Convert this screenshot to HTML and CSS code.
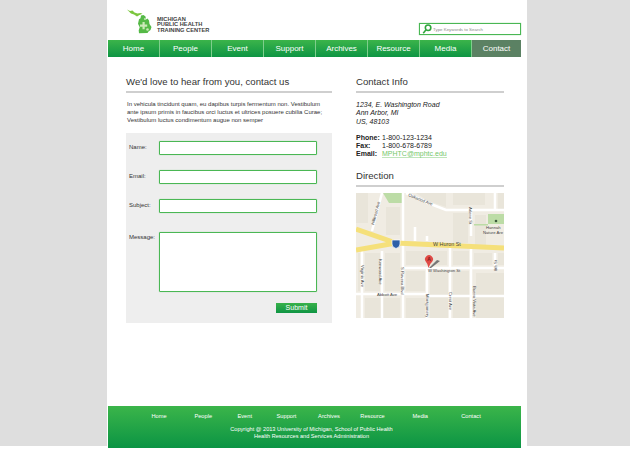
FILE: index.html
```html
<!DOCTYPE html>
<html lang="en">
<head>
<meta charset="utf-8">
<title>Contact - Michigan Public Health Training Center</title>
<link rel="stylesheet" href="styles.css">
</head>
<body>
<div class="page">
  <div class="column">
    <header class="top">
      <a class="logo" href="#">
        <svg class="logo-mark" viewBox="0 0 28 28" width="28" height="28">
          <path class="logo-up" d="M1 1.500l3 1.500 2.500-.5 2 2 3 1 3-.5 2 .8-3 1.200-2.500 1.500-3-2-3-1-2.500-2.500z"/>
          <path class="logo-fill" d="M15 7.500l2.500-.5 2 1.500.5 3 1.500-1 1.500 2 .5 3.500 2 3-1 3-2 1.500-1 1.500-8.500.2-.3-3 1-3-1.700-3.500 1-4.500 1.500-1z"/>
          <path class="logo-cut" d="M16.500 14h2.200v2.500h2.500v2.200h-2.500v2.500h-2.200v-2.500H14v-2.200h2.500z"/>
          <circle class="logo-cut" cx="21.500" cy="21.500" r="1.300"/>
          <circle class="logo-cut" cx="19" cy="11" r="1"/>
        </svg>
        <span class="logo-text">MICHIGAN<br>PUBLIC HEALTH<br>TRAINING CENTER</span>
      </a>
      <div class="search">
        <svg class="search-icon" viewBox="0 0 12 12" width="10" height="10">
          <circle cx="7.300" cy="4.500" r="3.300"/>
          <path d="M4.800 7L1.500 11"/>
        </svg>
        <span class="search-text">Type Keywords to Search</span>
      </div>
    </header>
    <nav class="nav">
      <a class="nav-item" href="#">Home</a>
      <a class="nav-item" href="#">People</a>
      <a class="nav-item" href="#">Event</a>
      <a class="nav-item" href="#">Support</a>
      <a class="nav-item" href="#">Archives</a>
      <a class="nav-item" href="#">Resource</a>
      <a class="nav-item" href="#">Media</a>
      <a class="nav-item active" href="#">Contact</a>
    </nav>
    <main class="content">
      <section class="left">
        <h1 class="heading">We'd love to hear from you, contact us</h1>
        <p class="intro">In vehicula tincidunt quam, eu dapibus turpis fermentum non. Vestibulum<br>ante ipsum primis in faucibus orci luctus et ultrices posuere cubilia Curae;<br>Vestibulum luctus condimentum augue non semper</p>
        <form class="form">
          <div class="row"><label class="label" for="f-name">Name:</label><input class="field" id="f-name" type="text"></div>
          <div class="row"><label class="label" for="f-email">Email:</label><input class="field" id="f-email" type="text"></div>
          <div class="row"><label class="label" for="f-subject">Subject:</label><input class="field" id="f-subject" type="text"></div>
          <div class="row row-message"><label class="label label-top" for="f-message">Message:</label><textarea class="field area" id="f-message"></textarea></div>
          <div class="actions"><button class="submit" type="button">Submit</button></div>
        </form>
      </section>
      <aside class="right">
        <h2 class="heading">Contact Info</h2>
        <address class="address">1234, E. Washington Road<br>Ann Arbor, MI<br>US, 48103</address>
        <dl class="phones">
          <dt>Phone:</dt><dd>1-800-123-1234</dd>
          <dt>Fax:</dt><dd>1-800-678-6789</dd>
          <dt>Email:</dt><dd><a class="mail" href="#">MPHTC@mphtc.edu</a></dd>
        </dl>
        <h2 class="heading direction">Direction</h2>
        <svg class="map" viewBox="0 0 148 125" width="148" height="125">
          <rect class="land" width="148" height="125"/>
          <path class="block" d="M50 0h40v14L72 8 60 0zM97 0h32v12H97zM142 0h6v18h-6zM2 60h2v38H2zM9 60h15v38H9zM29 60h15v38H29zM50 58h41v14H50zM97 58h16v14H97zM118 60h18v12h-18zM142 60h6v12h-6zM50 78h19v20H50zM74 78h18v47H74zM97 78h16v47H97zM120 80h28v45h-28zM9 105h35v20H9zM50 105h19v20H50zM97 20h15v30H97zM119 22h11v30h-11zM0 0h12v30H0zM30 14h14v28H30z"/>
          <path class="park" d="M27 0h19v10h-13z"/>
          <path class="park" d="M132 21h16v10h-16zM118 31h14v1.500h-14z"/>
          <g class="street">
            <path d="M47 0V125M6 57V125M26 58V125M71 75V125M94 55V125M115 15V43M115 55V125M139 0V18M139 60V75M0 101H71M71 103H148M47 75H148M50 0L72 10 90 17H148M16 38L26 0M59 34V48M71 43V48"/>
          </g>
          <path class="road" d="M0 36L40 50 148 55M0 57L40 50"/>
          <path class="shield" d="M36 47h8v4q0 3.500-4 4.500q-4-1-4-4.500z"/>
          <circle class="tree" cx="140" cy="28" r="1.300"/>
          <text class="map-text" x="77" y="52.500">W Huron St</text>
          <text class="map-text small" x="72" y="79">W Washington St</text>
          <text class="map-text small" x="21" y="103">Abbott Ave</text>
          <text class="map-text small" transform="translate(5 72) rotate(90)">Virginia Ave</text>
          <text class="map-text small" transform="translate(23 66) rotate(90)">Kenwood Ave</text>
          <text class="map-text small" transform="translate(45 74) rotate(90)">S Ravena Blvd</text>
          <text class="map-text small" transform="translate(69.500 101) rotate(90)">Montgomery</text>
          <text class="map-text small" transform="translate(93 99) rotate(90)">Crest Ave</text>
          <text class="map-text small" transform="translate(116.500 93) rotate(90)">Buena Vista Ave</text>
          <text class="map-text small" transform="translate(112.500 14) rotate(90)">Arlene St</text>
          <text class="map-text small" transform="translate(18 32) rotate(-75)">Hillwood Ave</text>
          <text class="map-text small" transform="translate(52 3) rotate(22)">Oakwood Ave</text>
          <text class="map-text small" transform="translate(141 78) rotate(-90)">8th St</text>
          <text class="map-text small" x="130" y="36">Hannah</text>
          <text class="map-text small" x="127" y="41">Nature Are</text>
          <path class="pin-shadow" d="M73 75L81 67l3 1-9 7z"/>
          <path class="pin" d="M72.500 75q-.5-4-2.800-6.500a4 4 0 1 1 6.600 0q-2.800 2.500-3.800 6.500z"/>
          <text class="pin-text" x="73" y="67.500">A</text>
        </svg>
      </aside>
    </main>
    <footer class="footer">
      <div class="footer-nav">
        <a href="#">Home</a><a href="#">People</a><a href="#">Event</a><a href="#">Support</a><a href="#">Archives</a><a href="#">Resource</a><a href="#">Media</a><a href="#">Contact</a>
      </div>
      <p class="copy">Copyright @ 2013 University of Michigan, School of Public Health<br>Health Resources and Services Administration</p>
    </footer>
  </div>
</div>
</body>
</html>
```
FILE: styles.css
```css
* { box-sizing: border-box; }
html, body { margin: 0; padding: 0; background: #fff; }
body { font-family: "Liberation Sans", Arial, sans-serif; color: #222; overflow: hidden; height: 450px; }
a { color: inherit; text-decoration: none; }
.page { background: #dedede; height: 446px; padding-left: 107px; }
.column { width: 420px; height: 450px; background: #fff; padding: 0 6px 0 1px; display: flex; flex-direction: column; }
.top { height: 40px; display: flex; justify-content: space-between; padding: 8px 0 0 18px; }
.logo { display: flex; align-items: flex-start; color: #3f3f3f; }
.logo-mark { display: block; }
.logo-fill { fill: #55b947; }
.logo-up { fill: #7cc63f; }
.logo-cut { fill: #cbe9b8; }
.logo-text { font-size: 5.700px; font-weight: bold; line-height: 5.800px; margin: 8.500px 0 0 3px; white-space: nowrap; }
.search { width: 102px; height: 12px; margin-top: 15px; border: 1px solid #4ab754; box-shadow: 0 0 1px #7dcd83; display: flex; align-items: center; padding-left: 2px; }
.search-icon { display: block; flex: none; fill: none; stroke: #2fa53c; stroke-width: 1.900; }
.search-text { font-size: 4.400px; color: #8a8a8a; margin-left: 1px; white-space: nowrap; }
.nav { height: 17px; display: flex; background: linear-gradient(#3bb44a, #0e9544); }
.nav-item { width: 52px; display: flex; align-items: center; justify-content: center; color: #fff; font-size: 8px; border-right: 1px solid #7fce8c; }
.nav-item.active { flex: 1; background: #5b8163; border-right: 0; color: #fff; }
.content { flex: 1; display: flex; padding: 0 0 0 18px; gap: 24px; }
.left { width: 206px; }
.right { width: 148px; }
.heading { margin: 0; font-size: 9.600px; font-weight: normal; color: #333; height: 36px; padding-top: 18px; line-height: 13px; border-bottom: 2px solid #cfcfcf; }
.intro { margin: 8px 0 0 1px; font-size: 6px; line-height: 7.900px; color: #333; white-space: nowrap; }
.form { margin-top: 8px; background: #eee; height: 190px; padding: 8px 15px 0 3px; }
.row { display: flex; margin-bottom: 15px; }
.row-message { margin-top: 19px; }
.label { width: 30px; font-size: 6px; line-height: 13px; color: #333; }
.label-top { line-height: 10px; }
.field { display: block; width: 158px; height: 14px; margin: 0; padding: 0; background: #fff; border: 1px solid #4ab754; box-shadow: 0 0 1px #7dcd83; border-radius: 1px; outline: 0; resize: none; }
.area { height: 60px; }
.actions { display: flex; justify-content: flex-end; margin-top: -4px; }
.submit { width: 41px; height: 10px; padding: 0; border: 0; background: linear-gradient(#38b14a, #0f9544); color: #fff; font-family: inherit; font-size: 7px; line-height: 10px; text-align: center; }
.address { margin-top: 8px; font-size: 7px; line-height: 8.300px; font-style: italic; color: #222; }
.phones { margin: 8px 0 0; display: grid; grid-template-columns: 26px 1fr; font-size: 7px; line-height: 8.300px; color: #222; }
.phones dt { font-weight: bold; }
.phones dd { margin: 0; }
.mail { color: #74c76b; border-bottom: 1px solid #bfe5bb; }
.direction { height: 28px; padding-top: 10px; }
.map { display: block; margin-top: 6px; }
.land { fill: #f0ece3; }
.park { fill: #bcdca6; }
.block { fill: #e9e5da; }
.street { fill: none; stroke: #fff; stroke-width: 2.500; }
.road { fill: none; stroke: #f5e07a; stroke-width: 5; }
.shield { fill: #2d5fa8; stroke: #fff; stroke-width: .7; }
.tree { fill: #3c5a3c; }
.map-text { font-size: 5.400px; fill: #444; }
.map-text.small { font-size: 4.200px; }
.pin { fill: #e04a45; }
.pin-shadow { fill: #777; }
.pin-text { font-size: 5px; font-weight: bold; text-anchor: middle; fill: #7a1a18; }
.footer { height: 42px; margin-top: auto; margin-bottom: 2px; background: linear-gradient(#3bb54a, #0b9444); color: #fff; font-size: 5.700px; padding-top: 7px; }
.footer-nav { display: grid; grid-template-columns: 46px 42.500px 40.500px 43px 42px 45px 50.500px 51px; justify-items: center; line-height: 7px; padding-left: 28px; }
.copy { margin: 6px 6px 0 0; text-align: center; line-height: 6.800px; font-size: 5.600px; }
```
